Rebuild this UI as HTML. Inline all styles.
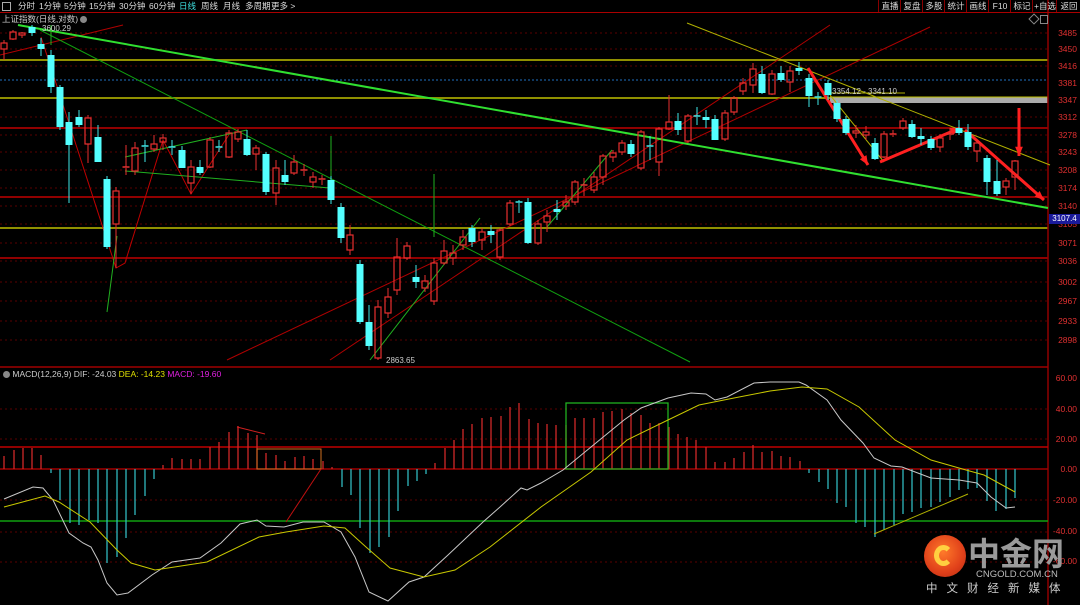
<!DOCTYPE html>
<html><head><meta charset="utf-8"><style>
html,body{margin:0;padding:0;background:#000;width:1080px;height:605px;overflow:hidden}
body{font-family:"Liberation Sans","Noto Sans CJK SC",sans-serif;position:relative}
.tb{position:absolute;left:0;top:0;width:1080px;height:12px;border-bottom:1px solid #a00;font-size:8.5px;color:#ddd;line-height:12px;white-space:nowrap}
.tb span{position:absolute;top:0}
.tb .b{border-left:1px solid #800;text-align:center;height:12px}
.ax{position:absolute;font-size:8.5px;color:#e03030;font-family:"Liberation Sans",sans-serif}
</style></head><body>
<svg id="s" width="1080" height="605" style="position:absolute;left:0;top:0" xmlns="http://www.w3.org/2000/svg"></svg>
<div class="tb">
<span style="left:2px;width:7px;height:7px;border:1px solid #aaa;top:2px"></span>
<span style="left:18px">分时</span><span style="left:39px">1分钟</span><span style="left:64px">5分钟</span><span style="left:89px">15分钟</span><span style="left:119px">30分钟</span><span style="left:149px">60分钟</span><span style="left:179px;color:#3ee0e0">日线</span><span style="left:201px">周线</span><span style="left:223px">月线</span><span style="left:245px">多周期</span><span style="left:271px">更多 &gt;</span>
<span class="b" style="left:878px;width:22px">直播</span><span class="b" style="left:900px;width:22px">复盘</span><span class="b" style="left:922px;width:22px">多股</span><span class="b" style="left:944px;width:22px">统计</span><span class="b" style="left:966px;width:22px">画线</span><span class="b" style="left:988px;width:22px">F10</span><span class="b" style="left:1010px;width:22px">标记</span><span class="b" style="left:1032px;width:24px">+自选</span><span class="b" style="left:1056px;width:24px">返回</span>
</div>
<div style="position:absolute;left:2px;top:13px;font-size:8.5px;color:#ccc">上证指数(日线,对数) <span style="display:inline-block;width:7px;height:7px;border-radius:50%;background:#888;vertical-align:-1px"></span></div>
<div style="position:absolute;left:1030px;top:15px;width:6px;height:6px;border:1px solid #888;transform:rotate(45deg)"></div>
<div style="position:absolute;left:1040px;top:15px;width:6px;height:7px;border:1px solid #888"></div>
<div style="position:absolute;left:3px;top:369px;font-size:8.5px;color:#ccc"><span style="display:inline-block;width:7px;height:7px;border-radius:50%;background:#888;vertical-align:-1px"></span> MACD(12,26,9) DIF: -24.03 <span style="color:#e0e000">DEA: -14.23</span> <span style="color:#e020e0">MACD: -19.60</span></div>
<div style="position:absolute;left:42px;top:24px;font-size:8px;color:#ccc">3600.29</div>
<div style="position:absolute;left:386px;top:356px;font-size:8px;color:#ccc">2863.65</div>
<div style="position:absolute;left:832px;top:87px;font-size:8px;color:#ccc">3354.12 - 3341.10</div>
<div id="ax"></div>
<div style="position:absolute;left:1049px;top:214px;width:31px;height:10px;background:#1a1a9a;color:#fff;font-size:8px;line-height:10px;text-align:center">3107.4</div>
<div style="position:absolute;left:924px;top:535px;width:42px;height:42px;border-radius:50%;background:radial-gradient(circle at 45% 40%,#ff7a2a,#e0401a 60%,#b22a10)"></div>
<div style="position:absolute;left:934px;top:545px;width:19px;height:21px;border-radius:50%;border:5px solid #ffd040;border-right-color:transparent;box-sizing:border-box"></div>
<div style="position:absolute;left:968px;top:533px;font-size:32px;font-weight:bold;color:#9a9a9a;font-family:'Noto Sans CJK SC',sans-serif;line-height:38px">中金网</div>
<div style="position:absolute;left:976px;top:569px;font-size:9.5px;color:#bbb">CNGOLD.COM.CN</div>
<div style="position:absolute;left:926px;top:580px;font-size:11.5px;color:#ccc;letter-spacing:9px;font-family:'Noto Sans CJK SC',sans-serif">中文财经新媒体</div>
<script>
var s=document.getElementById('s'),h='';
function L(x1,y1,x2,y2,c,w,d){h+='<line x1="'+x1+'" y1="'+y1+'" x2="'+x2+'" y2="'+y2+'" stroke="'+c+'" stroke-width="'+(w||1)+'"'+(d?' stroke-dasharray="'+d+'"':'')+'/>';}
function P(pts,c,w){h+='<polyline fill="none" stroke="'+c+'" stroke-width="'+(w||1)+'" points="'+pts+'"/>';}
[33,49,66,117,135,152,170,188,206,224,243,261,282,301,321,340].forEach(function(y){L(0,y,1048,y,'#5a0000',1,'2,3')});
[409,439,500,532,562].forEach(function(y){L(0,y,1048,y,'#5a0000',1,'2,3')});
L(0,80,1048,80,'#2070c0',1,'2,2');
L(0,60,1048,60,'#909000',2);L(0,98,1048,98,'#909000',2);L(0,228,1048,228,'#909000',2);
L(830,100,1048,100,'#aaa',6);L(830,97,1048,97,'#c0c000',1);
L(0,128,1048,128,'#c00000',1.5);L(0,197,1048,197,'#c00000',1.5);L(0,258,1048,258,'#c00000',1.5);
L(1048,0,1048,605,'#900000',1.5);L(0,367,1048,367,'#a00000',1.5);
L(0,469,1048,469,'#a00000',1.5);L(0,447,1048,447,'#c00000',1.5);L(0,521,1048,521,'#10a010',1.5);
L(0,55,123,25,'#b00000');L(227,360,930,27,'#b00000');L(330,360,830,25,'#b00000');
L(687,23,1050,165,'#b0b000');L(830,95,884,162,'#b0b000');L(830,93,905,93,'#b0b000');
L(40,30,690,362,'#10a010');L(18,25,1048,208,'#30e030',2);
P('41,37 116,268 125,263 163,140 191,194 230,133','#c00000');
L(125,157,247,130,'#20b020');L(125,171,330,188,'#20b020');L(107,312,117,236,'#20b020');
L(331,136,331,190,'#20b020');L(434,174,434,237,'#20b020');L(370,360,480,218,'#20b020');L(547,227,612,150,'#20b020');
L(51,25,51,45,'#20b020');
function A(x1,y1,x2,y2){L(x1,y1,x2,y2,'#ff2020',3);var a=Math.atan2(y2-y1,x2-x1),l=10;h+='<polygon fill="#ff2020" points="'+x2+','+y2+' '+(x2-l*Math.cos(a-0.4))+','+(y2-l*Math.sin(a-0.4))+' '+(x2-l*Math.cos(a+0.4))+','+(y2-l*Math.sin(a+0.4))+'"/>';}
A(808,68,868,165);A(880,162,960,128);A(965,130,1044,200);A(1019,108,1019,156);
var C=[[4,43,49,'r',40,60],[13,32,39,'r',30,40],[22,33,35,'r',32,38],[32,27,33,'c',25,36],[41,44,49,'c',38,56],[51,55,87,'c',50,93],[60,87,127,'c',85,130],[69,122,145,'c',112,203],[79,117,125,'c',110,127],[88,118,144,'r',115,163],[98,137,162,'c',125,162],[107,179,247,'c',176,249],[116,191,224,'r',187,268],[126,167,168,'r',145,175],[135,148,171,'r',142,175],[145,146,147,'c',140,162],[154,144,149,'r',135,152],[163,138,142,'r',134,150],[172,147,148,'c',140,155],[182,150,168,'c',146,168],[191,167,183,'r',160,194],[200,167,173,'c',160,175],[210,140,167,'r',137,168],[219,147,148,'c',140,152],[229,133,157,'r',130,158],[238,132,139,'r',129,142],[247,139,155,'c',130,156],[256,148,154,'r',145,170],[266,154,192,'c',152,195],[276,168,193,'r',160,205],[285,175,182,'c',160,185],[294,162,173,'r',155,175],[304,170,171,'r',164,176],[313,177,182,'r',172,188],[322,179,180,'r',175,185],[331,180,200,'c',176,204],[341,207,238,'c',203,243],[350,235,250,'r',225,255],[360,264,322,'c',260,324],[369,322,346,'c',305,350],[378,307,358,'r',300,360],[388,297,313,'r',288,318],[397,257,290,'r',238,295],[407,246,258,'r',242,260],[416,277,282,'c',265,288],[425,281,288,'r',275,292],[434,263,301,'r',258,305],[444,251,263,'r',240,265],[453,253,258,'r',245,265],[463,237,245,'r',230,250],[472,228,242,'c',225,247],[482,232,240,'r',228,250],[491,231,235,'c',225,243],[500,230,257,'r',228,260],[510,203,224,'r',200,226],[519,202,203,'c',200,213],[528,202,243,'c',198,244],[538,224,243,'r',220,245],[547,216,222,'r',210,232],[557,209,212,'c',200,220],[566,202,206,'r',195,210],[575,182,202,'r',180,205],[584,185,186,'r',178,196],[594,177,190,'r',172,193],[603,156,177,'r',154,185],[613,153,157,'r',150,162],[622,143,152,'r',140,155],[631,144,154,'c',140,157],[641,132,168,'r',130,170],[650,146,147,'c',136,160],[659,129,162,'r',127,176],[669,122,129,'r',95,130],[678,121,130,'c',113,135],[688,116,141,'r',114,143],[697,116,117,'c',107,125],[706,117,120,'c',110,128],[715,119,140,'c',115,140],[725,113,139,'r',110,141],[734,98,112,'r',96,115],[743,83,91,'r',78,95],[753,69,85,'r',63,93],[762,74,93,'c',66,94],[772,74,94,'r',70,95],[781,73,80,'c',66,82],[790,71,82,'r',66,92],[799,68,71,'c',62,75],[809,78,96,'c',74,107],[818,97,98,'c',92,105],[828,83,95,'c',80,100],[837,103,119,'c',100,122],[846,119,133,'c',116,135],[856,131,133,'r',125,138],[866,132,135,'r',126,140],[875,143,159,'c',138,160],[884,134,157,'r',131,158],[893,134,135,'r',130,137],[903,121,128,'r',118,130],[912,124,137,'c',120,138],[921,136,139,'c',128,145],[931,139,148,'c',136,150],[940,138,147,'r',134,152],[950,134,135,'r',128,140],[959,128,133,'c',120,135],[968,132,147,'c',124,150],[977,143,151,'r',140,162],[987,158,182,'c',155,195],[997,181,194,'c',160,196],[1006,181,187,'r',178,195],[1015,161,177,'r',160,190]];
C.forEach(function(c){var x=c[0],cr=c[3]=='r'?'#e83030':'#40e8e8';
L(x,c[4],x,c[1],cr);L(x,c[2],x,c[5],cr);
if(c[2]-c[1]<2){L(x-3.5,c[1],x+3.5,c[1],cr,1.5);}
else if(c[3]=='r')h+='<rect x="'+(x-3)+'" y="'+c[1]+'" width="6" height="'+(c[2]-c[1])+'" fill="none" stroke="#e83030" stroke-width="1.2"/>';
else h+='<rect x="'+(x-3.5)+'" y="'+c[1]+'" width="7" height="'+(c[2]-c[1])+'" fill="#54ffff"/>';});
var B=[[4,456],[14,450],[23,448],[32,448],[41,455],[51,473],[60,500],[70,523],[79,525],[89,520],[98,523],[107,563],[117,557],[126,538],[135,515],[145,496],[154,479],[163,465],[172,458],[182,459],[191,459],[200,459],[210,447],[219,442],[229,432],[238,426],[248,433],[257,435],[266,453],[276,455],[285,461],[295,457],[304,456],[313,459],[323,461],[332,467],[342,487],[351,495],[360,528],[370,553],[379,547],[389,537],[398,511],[408,486],[417,481],[426,474],[435,463],[445,448],[454,440],[463,429],[472,424],[482,418],[491,417],[501,416],[510,407],[519,403],[529,419],[538,423],[547,424],[556,425],[566,425],[575,418],[584,418],[594,418],[603,412],[612,411],[622,409],[631,413],[641,415],[650,423],[659,423],[669,427],[678,434],[687,437],[696,440],[706,447],[715,462],[725,462],[734,458],[744,452],[753,445],[762,452],[772,451],[781,456],[790,457],[800,461],[809,473],[819,482],[828,489],[837,503],[846,507],[856,523],[865,527],[875,537],[884,530],[894,525],[903,514],[912,512],[921,508],[931,507],[940,502],[950,497],[959,490],[968,489],[977,488],[987,501],[996,511],[1006,509],[1015,498]];
B.forEach(function(b){L(b[0],469,b[0],b[1],b[1]<469?'#d02828':'#30b8c0',1.3)});
h+='<rect x="257" y="449" width="64" height="20" fill="none" stroke="#d07020" stroke-width="1"/>';
h+='<rect x="566" y="403" width="102" height="66" fill="none" stroke="#20b020" stroke-width="1.3"/>';
P('237,427 265,434','#d02020');L(286,522,321,469,'#c01010');L(874,534,968,494,'#b0b000');
P('4,499 33,487 43,488 53,500 69,533 83,543 91,547 98,560 107,583 117,595 128,593 152,575 172,562 200,558 221,543 240,524 257,520 266,526 284,527 303,522 324,522 341,532 355,557 369,592 388,601 409,582 424,577 448,555 483,522 500,507 521,488 527,490 541,483 563,470 591,447 624,420 641,408 668,398 691,393 706,394 715,400 727,397 754,383 770,382 799,382 806,385 827,400 841,420 863,443 874,458 891,466 902,467 931,478 959,480 977,483 991,497 1006,508 1015,507','#c8c8c8');
P('4,507 45,496 59,502 90,522 117,550 131,563 155,570 207,562 259,537 286,532 324,526 345,528 366,547 390,568 424,577 455,570 490,547 541,507 591,472 627,440 668,420 699,405 734,398 770,391 802,387 827,389 859,407 895,440 931,460 966,470 984,475 1015,492','#c8c800');
s.innerHTML=h;
var ax='',lab=[[3485,33],[3450,49],[3416,66],[3381,83],[3347,100],[3312,117],[3278,135],[3243,152],[3208,170],[3174,188],[3140,206],[3105,224],[3071,243],[3036,261],[3002,282],[2967,301],[2933,321],[2898,340],['60.00',378],['40.00',409],['20.00',439],['0.00',469],['-20.00',500],['-40.00',531],['-60.00',561]];
lab.forEach(function(l){ax+='<div class="ax" style="top:'+(l[1]-5)+'px;right:3px">'+l[0]+'</div>'});
document.getElementById('ax').innerHTML=ax;
</script>
</body></html>
